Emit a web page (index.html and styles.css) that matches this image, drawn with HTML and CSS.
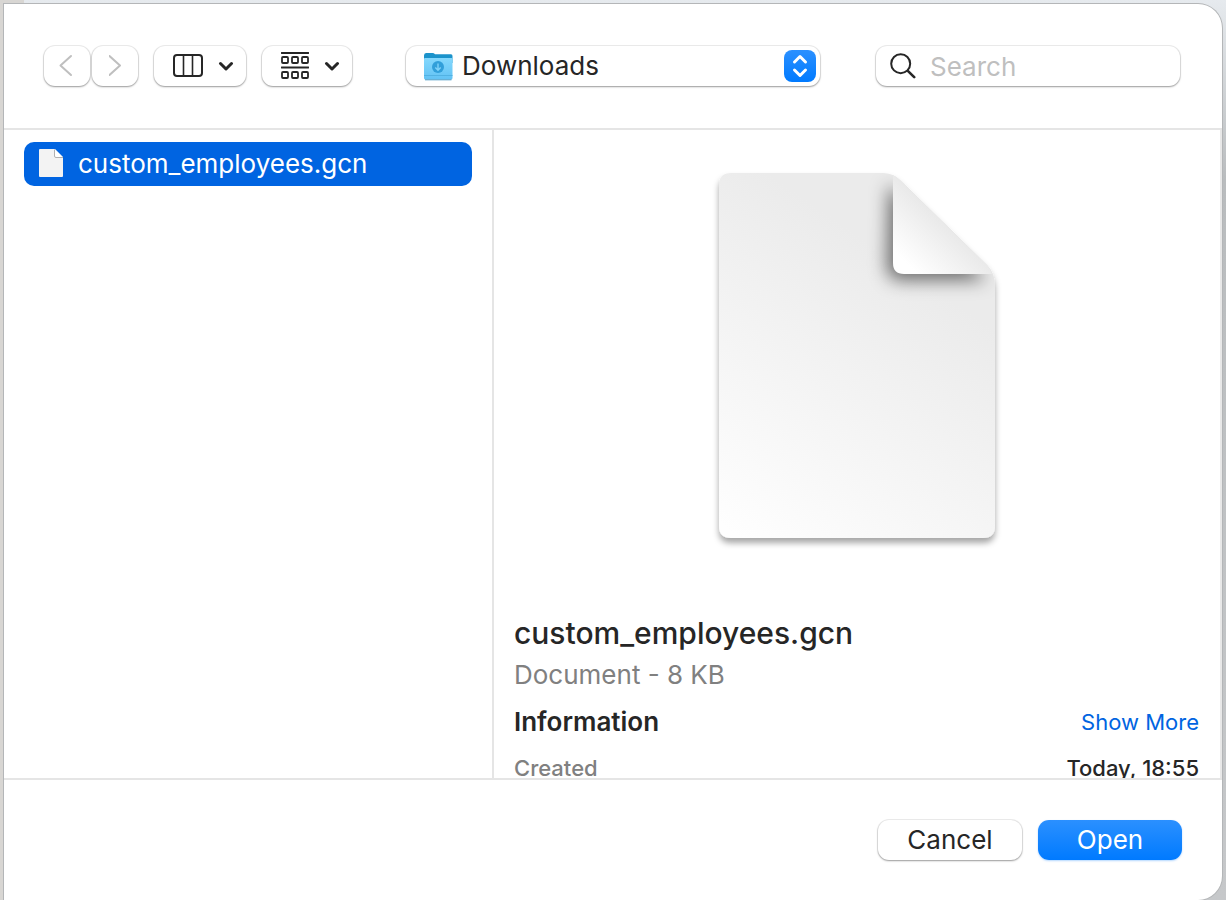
FILE: index.html
```
<!DOCTYPE html>
<html lang="en">
<head>
    <meta charset="UTF-8">
    <meta name="viewport" content="width=device-width, initial-scale=1.0">
    <title>Open</title>
    <link rel="stylesheet" href="styles.css">
</head>
<body>
    <form class="dialog">
        <header class="toolbar">
            <div class="nav">
                <button type="button" class="control nav-button" aria-label="Back" disabled>
                    <svg width="16" height="24" viewBox="0 0 16 24"><path d="M12 2 L1.5 11.5 L12 21"/></svg>
                </button>
                <button type="button" class="control nav-button" aria-label="Forward" disabled>
                    <svg width="12" height="24" viewBox="0 0 12 24"><path d="M0.5 2 L11 11.5 L0.5 21"/></svg>
                </button>
            </div>
            <button type="button" class="control view-button" aria-label="View as columns">
                <svg width="30" height="24" viewBox="0 0 30 24">
                    <rect x="1" y="1" width="28" height="21" rx="3" fill="none" stroke="#262626" stroke-width="2"/>
                    <path d="M10.5 1 V22 M19.5 1 V22" stroke="#262626" stroke-width="1.6"/>
                </svg>
                <svg class="chevron" width="16" height="10" viewBox="0 0 16 10"><path d="M2.5 2.5 L8 8 L13.5 2.5"/></svg>
            </button>
            <button type="button" class="control group-button" aria-label="Group items">
                <svg width="28" height="28" viewBox="0 0 28 28" fill="none" stroke="#262626" stroke-width="1.8">
                    <path d="M0.5 1 H27.5 M0.5 15.5 H27.5" stroke-linecap="round"/>
                    <rect x="1" y="5" width="6" height="6" rx="1"/>
                    <rect x="11" y="5" width="6" height="6" rx="1"/>
                    <rect x="21" y="5" width="6" height="6" rx="1"/>
                    <rect x="1" y="20" width="6" height="6" rx="1"/>
                    <rect x="11" y="20" width="6" height="6" rx="1"/>
                    <rect x="21" y="20" width="6" height="6" rx="1"/>
                </svg>
                <svg class="chevron" width="16" height="10" viewBox="0 0 16 10"><path d="M2.5 2.5 L8 8 L13.5 2.5"/></svg>
            </button>
            <label class="control location">
                <svg width="30" height="30" viewBox="0 0 30 30">
                    <defs>
                        <linearGradient id="folder" x1="0" y1="0" x2="0" y2="1">
                            <stop offset="0" stop-color="#84d8fd"/>
                            <stop offset="1" stop-color="#62c2f4"/>
                        </linearGradient>
                    </defs>
                    <path d="M1 4.5 Q1 2 3 2 H9.500 Q11 2 12 3.200 H28 Q29.500 3.200 29.500 5 V12 H1 Z" fill="#1b93cb"/>
                    <path d="M1 8 Q1 7 2 7 H28.500 Q29.500 7 29.500 8 V27 Q29.500 28.500 28 28.500 H2.500 Q1 28.500 1 27 Z" fill="url(#folder)"/>
                    <path d="M1 24.500 H29.500" stroke="#52b2e3" stroke-width="1"/>
                    <path d="M2 28.800 H28.500" stroke="#4a9cc5" stroke-width="1"/>
                    <circle cx="15" cy="16" r="6" fill="#319fda"/>
                    <path d="M15 12.500 V19 M12.300 16.500 L15 19.200 L17.700 16.500" fill="none" stroke="#80d3fa" stroke-width="1.400"/>
                </svg>
                <select class="location-select" aria-label="Location">
                    <option>Downloads</option>
                </select>
                <span class="stepper">
                    <svg width="16" height="24" viewBox="0 0 16 24"><path d="M2.500 8 L8 2.500 L13.500 8 M2.500 16 L8 21.500 L13.500 16"/></svg>
                </span>
            </label>
            <label class="control search">
                <svg width="26" height="26" viewBox="0 0 26 26" fill="none" stroke="#262626" stroke-linecap="round">
                    <circle cx="10.700" cy="10.700" r="9.500" stroke-width="2"/>
                    <path d="M17.800 17.800 L24.200 24.200" stroke-width="2.600"/>
                </svg>
                <input type="text" class="search-input" placeholder="Search" aria-label="Search">
            </label>
        </header>

        <main class="browser">
            <section class="files">
                <button type="button" class="file">
                    <svg width="26" height="30" viewBox="0 0 26 30">
                        <path d="M0 2 Q0 1 1 1 H16 L24 9 V28 Q24 29 23 29 H1 Q0 29 0 28 Z" fill="#f3f3f3"/>
                        <path d="M15.500 1 V8 Q15.500 9.500 17 9.500 H24 L16 1.500 Z" fill="#fff"/>
                        <path d="M15.500 1.500 V8 Q15.500 9.500 17 9.500 H24" fill="none" stroke="#b0b0b0" stroke-width="1"/>
                    </svg>
                    custom_employees.gcn
                </button>
            </section>

            <section class="preview">
                <svg class="preview-icon" width="300" height="400" viewBox="0 0 300 400">
                    <defs>
                        <linearGradient id="page" gradientUnits="userSpaceOnUse" x1="50" y1="390" x2="230" y2="130">
                            <stop offset="0" stop-color="#fefefe"/>
                            <stop offset="1" stop-color="#ebebeb"/>
                        </linearGradient>
                        <linearGradient id="fold" gradientUnits="userSpaceOnUse" x1="200" y1="104" x2="240" y2="62">
                            <stop offset="0" stop-color="#fff"/>
                            <stop offset="1" stop-color="#e8e8e8"/>
                        </linearGradient>
                        <filter id="page-shadow" x="-10%" y="-10%" width="120%" height="120%">
                            <feDropShadow dx="0" dy="5" stdDeviation="3" flood-color="#000" flood-opacity="0.35"/>
                        </filter>
                        <filter id="fold-shadow" x="-50%" y="-50%" width="200%" height="200%">
                            <feGaussianBlur stdDeviation="9"/>
                        </filter>
                        <clipPath id="page-clip">
                            <path d="M24 13 H176 Q186 13 193 20 L280 105 Q288 113 288 126 V366 Q288 378 276 378 H24 Q12 378 12 366 V25 Q12 13 24 13 Z"/>
                        </clipPath>
                    </defs>
                    <path d="M24 13 H176 Q186 13 193 20 L280 105 Q288 113 288 126 V366 Q288 378 276 378 H24 Q12 378 12 366 V25 Q12 13 24 13 Z" fill="url(#page)" filter="url(#page-shadow)"/>
                    <g clip-path="url(#page-clip)">
                        <path d="M182 24 L280 120 H194 Q180 120 180 106 Z" fill="#000" fill-opacity="0.55" filter="url(#fold-shadow)"/>
                    </g>
                    <path d="M186 15 Q190 17 193 20 L280 105 Q284 109 285 114 H197 Q186 114 186 103 Z" fill="url(#fold)"/>
                </svg>
                <h1 class="file-name">custom_employees.gcn</h1>
                <p class="file-kind">Document - 8 KB</p>
                <div class="row">
                    <h2 class="info-title">Information</h2>
                    <a class="more" href="#">Show More</a>
                </div>
                <dl class="row">
                    <dt class="info-label">Created</dt>
                    <dd class="info-value">Today, 18:55</dd>
                </dl>
            </section>
        </main>

        <footer class="actions">
            <button type="button" class="control action">Cancel</button>
            <button type="button" class="control action primary">Open</button>
        </footer>
    </form>
</body>
</html>
```
FILE: styles.css
```
* {
    box-sizing: border-box;
}

body {
    margin: 0;
    padding: 4px 4px 0;
    height: 100vh;
    background: linear-gradient(to right, #d8d6d3 24px, transparent 24px), linear-gradient(to bottom, #e6eaee, #b9bcbe 20%, #c6c8ca);
    font-family: Inter, "Liberation Sans", sans-serif;
    font-size: 26px;
    color: #262626;
}

.dialog {
    display: flex;
    flex-direction: column;
    height: 100%;
    background: #fff;
    border-radius: 0 24px 24px 0;
    box-shadow: 0 0 0 1px #b4b6b8;
}

button,
input,
select {
    font: inherit;
    color: inherit;
}

.control {
    display: flex;
    align-items: center;
    height: 40px;
    padding: 0;
    border: none;
    border-radius: 11px;
    background: #fff;
    box-shadow: 0 0 0 1px rgba(0, 0, 0, 0.07), 0 1px 2px rgba(0, 0, 0, 0.35);
}

/* toolbar */
.toolbar {
    display: flex;
    align-items: center;
    gap: 16px;
    height: 126px;
    padding: 0 42px 0 40px;
    border-bottom: 2px solid #e5e5e5;
}

.nav {
    display: flex;
    gap: 2px;
}

.nav-button {
    justify-content: center;
    width: 46px;
}

.nav-button path {
    fill: none;
    stroke: #bfbfbf;
    stroke-width: 2;
    stroke-linecap: round;
    stroke-linejoin: round;
}

.view-button,
.group-button {
    justify-content: space-between;
    width: 92px;
    padding: 0 12px 0 19px;
}

.group-button {
    width: 90px;
}

.chevron path {
    fill: none;
    stroke: #262626;
    stroke-width: 3;
    stroke-linecap: round;
    stroke-linejoin: round;
}

.location {
    flex: 1;
    margin: 0 40px 0 38px;
    padding: 0 4px 0 17px;
}

.location-select {
    flex: 1;
    min-width: 0;
    padding: 0 0 2px 9px;
    border: none;
    background: none;
    appearance: none;
}

.stepper {
    display: flex;
    align-items: center;
    justify-content: center;
    width: 32px;
    height: 32px;
    border-radius: 8px;
    background: linear-gradient(to bottom, #2b90ff, #007aff);
}

.stepper path {
    fill: none;
    stroke: #fff;
    stroke-width: 3;
    stroke-linecap: round;
    stroke-linejoin: round;
}

.search {
    width: 304px;
    padding: 0 14px;
    gap: 14px;
}

.search-input {
    flex: 1;
    min-width: 0;
    padding: 1px 0 0;
    border: none;
    background: none;
}

.search-input::placeholder {
    color: #bfbfbf;
    opacity: 1;
}

/* file columns */
.browser {
    display: flex;
    flex: 1;
    min-height: 0;
}

.files {
    width: 490px;
    padding: 12px 20px;
    border-right: 2px solid #e5e5e5;
}

.file {
    display: flex;
    align-items: center;
    gap: 13px;
    width: 100%;
    height: 44px;
    padding: 0 15px 2px;
    border: none;
    border-radius: 10px;
    background: #0064e1;
    color: #fff;
}

.preview {
    display: flex;
    flex-direction: column;
    flex: 1;
    overflow: hidden;
    padding: 30px 21px 0 20px;
    border-right: 2px solid #e8e8e8;
}

.preview-icon {
    flex-shrink: 0;
    align-self: center;
}

.file-name {
    margin: 54px 0 0;
    font-size: 30px;
    line-height: 38px;
    font-weight: 500;
}

.file-kind {
    margin: 6px 0 0;
    line-height: 34px;
    color: #808080;
}

.row {
    display: flex;
    align-items: center;
    justify-content: space-between;
    flex-shrink: 0;
    margin: 14px 0 0;
    font-size: 22px;
    line-height: 32px;
}

.info-title {
    margin: 0;
    font-size: 26px;
    font-weight: 600;
}

.more {
    color: #0064e1;
    text-decoration: none;
}

.info-label {
    color: #808080;
    font-weight: 500;
}

.info-value {
    margin: 0;
    font-weight: 500;
}

/* bottom buttons */
.actions {
    display: flex;
    align-items: center;
    justify-content: flex-end;
    gap: 16px;
    height: 122px;
    padding: 0 40px 0 0;
    border-top: 2px solid #e5e5e5;
}

.action {
    justify-content: center;
    width: 144px;
    padding-bottom: 2px;
}

.primary {
    background: linear-gradient(to bottom, #2b90ff, #007aff);
    box-shadow: 0 1px 2px rgba(0, 122, 255, 0.3);
    color: #fff;
}
```
